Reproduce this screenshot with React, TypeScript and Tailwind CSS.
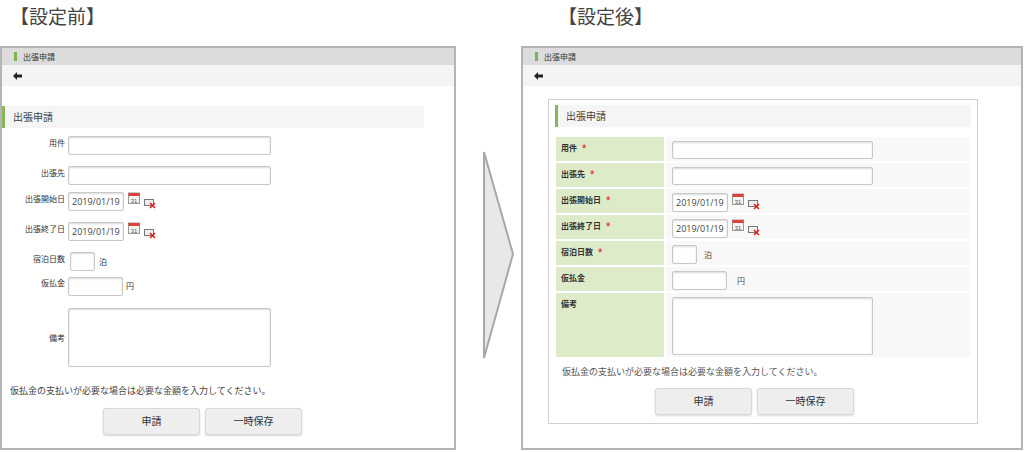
import React from "react";

const F = { fontFamily: '"Open Sans","Noto Sans CJK JP",sans-serif' };

function Cal() {
  return (
    <svg width="12" height="12" viewBox="0 0 12 12">
      <rect x="0.5" y="1" width="11" height="10.5" fill="#f4f4f4" stroke="#999" />
      <rect x="0.5" y="1" width="11" height="3" fill="#e0413a" />
      <text x="6" y="10.5" fontSize="6" textAnchor="middle" fill="#555" fontFamily="Liberation Sans">31</text>
    </svg>
  );
}
function Clr() {
  return (
    <svg width="12" height="11" viewBox="0 0 12 11" className="mt-[6px]">
      <rect x="0.5" y="1.5" width="9" height="6" fill="#eee" stroke="#777" />
      <path d="M6 5l5 5M11 5l-5 5" stroke="#e0201a" strokeWidth="1.6" />
    </svg>
  );
}
const inp = "bg-white border border-[#c8c8c8] rounded-[2px] shadow-[inset_0_1px_2px_rgba(0,0,0,0.15)]";

function DateIn() {
  return (
    <div className="flex items-start gap-[4px]">
      <div className={`${inp} w-[56px] h-[19px] text-[9px] text-[#444] pl-[3px] flex items-center`}>2019/01/19</div>
      <Cal />
      <Clr />
    </div>
  );
}

function Header() {
  return (
    <>
      <div className="h-[17px] bg-[#dcdcdc] flex items-center pl-[12px] gap-[6px]">
        <div className="w-[3px] h-[9px] bg-[#7ab547]" />
        <span className="text-[8px] text-[#333]">出張申請</span>
      </div>
      <div className="h-[21px] bg-[#f4f4f4] flex items-center pl-[11px]">
        <svg width="9" height="8" viewBox="0 0 9 8"><path d="M0 4L4 0v2.5h5v3H4V8z" fill="#222" /></svg>
      </div>
    </>
  );
}

function Btn({ t }: { t: string }) {
  return (
    <div className="w-[97px] h-[27px] bg-[#eeeeee] border border-[#d8d8d8] rounded-[3px] shadow-[0_1px_2px_rgba(0,0,0,0.15)] flex items-center justify-center text-[10px] text-[#333]">{t}</div>
  );
}

function Left() {
  const L = ({ t, c }: { t: string; c: string }) => (
    <div className={`w-[66px] text-right pr-[3px] text-[8px] text-[#333] ${c}`}>{t}</div>
  );
  return (
    <div className="w-[456px] h-[404px] border-2 border-[#b4b4b4] flex flex-col">
      <Header />
      <div className="mt-[20px] w-[422px] h-[22px] bg-[#f5f5f5] border-l-[3px] border-[#8ab65a] flex items-center pl-[8px] text-[10px] text-[#444]">出張申請</div>
      <div className="flex flex-col mt-[8px] gap-[11px]">
        <div className="flex items-start"><L t="用件" c="mt-[1px]" /><div className={`${inp} w-[203px] h-[19px]`} /></div>
        <div className="flex items-start"><L t="出張先" c="mt-[1px]" /><div className={`${inp} w-[203px] h-[19px]`} /></div>
      </div>
      <div className="flex flex-col mt-[7px] gap-[11px]">
        <div className="flex items-start"><L t="出張開始日" c="mt-[1px]" /><DateIn /></div>
        <div className="flex items-start"><L t="出張終了日" c="mt-[1px]" /><DateIn /></div>
        <div className="flex items-center"><L t="宿泊日数" c="-mt-[6px]" /><div className="w-[2px]" /><div className={`${inp} w-[25px] h-[19px]`} /><span className="ml-[4px] text-[8px] text-[#333]">泊</span></div>
      </div>
      <div className="flex items-start mt-[6px]"><L t="仮払金" c="mt-0" /><div className={`${inp} w-[55px] h-[19px]`} /><span className="ml-[3px] mt-[3px] text-[8px] text-[#333]">円</span></div>
      <div className="flex items-center mt-[12px]"><L t="備考" c="" /><div className={`${inp} w-[203px] h-[59px]`} /></div>
      <div className="mt-[17px] pl-[8px] text-[9px] text-[#444]">仮払金の支払いが必要な場合は必要な金額を入力してください。</div>
      <div className="mt-[10px] flex gap-[5px] pl-[101px]"><Btn t="申請" /><Btn t="一時保存" /></div>
    </div>
  );
}

function Row({ t, req, h, children }: { t: string; req?: boolean; h: string; children: React.ReactNode }) {
  return (
    <div className={`flex gap-[2px] ${h}`}>
      <div className="w-[108px] bg-[#deebc9] text-[8px] font-bold text-[#333] pl-[5px] pt-[5px]">
        {t}{req && <span className="text-[#e0415a] ml-[5px]">*</span>}
      </div>
      <div className="flex-1 bg-[#f8f8f8] pl-[6px] pt-[4px]">{children}</div>
    </div>
  );
}

function Right() {
  return (
    <div className="w-[502px] h-[404px] border-2 border-[#b4b4b4] flex flex-col">
      <Header />
      <div className="mt-[13px] ml-[25px] w-[430px] h-[325px] border border-[#d0d0d0] flex flex-col px-[6px] pt-[5px]">
        <div className="h-[22px] bg-[#f5f5f5] border-l-[3px] border-[#8ab65a] flex items-center pl-[8px] text-[10px] text-[#444]">出張申請</div>
        <div className="mt-[10px] flex flex-col gap-[2px] pl-[1px] pr-[1px]">
          <Row t="用件" req h="h-[24px]"><div className={`${inp} w-[201px] h-[18px]`} /></Row>
          <Row t="出張先" req h="h-[24px]"><div className={`${inp} w-[201px] h-[18px]`} /></Row>
          <Row t="出張開始日" req h="h-[24px]"><DateIn /></Row>
          <Row t="出張終了日" req h="h-[24px]"><DateIn /></Row>
          <Row t="宿泊日数" req h="h-[24px]"><div className="flex items-center"><div className={`${inp} w-[25px] h-[19px]`} /><span className="ml-[7px] text-[8px] text-[#444]">泊</span></div></Row>
          <Row t="仮払金" h="h-[24px]"><div className="flex items-center"><div className={`${inp} w-[55px] h-[19px]`} /><span className="ml-[10px] text-[8px] text-[#444]">円</span></div></Row>
          <Row t="備考" h="h-[64px]"><div className={`${inp} w-[201px] h-[58px]`} /></Row>
        </div>
        <div className="mt-[8px] pl-[7px] text-[9px] text-[#555]">仮払金の支払いが必要な場合は必要な金額を入力してください。</div>
        <div className="mt-[9px] flex gap-[5px] pl-[100px]"><Btn t="申請" /><Btn t="一時保存" /></div>
      </div>
    </div>
  );
}

export default function App() {
  return (
    <div style={F} className="w-[1024px] h-[452px] bg-white relative overflow-hidden">
      <div className="flex h-[46px]">
        <div className="w-[521px] pl-[10px] pt-[3px] text-[19px] text-[#444]">【設定前】</div>
        <div className="pl-[37px] pt-[3px] text-[19px] text-[#444]">【設定後】</div>
      </div>
      <div className="flex items-start">
        <Left />
        <div className="w-[65px] h-[404px] pl-[26px] pt-[104px]">
          <svg width="34" height="212" viewBox="0 0 34 212">
            <path d="M2 2L31 104L2 208Z" fill="#e8e8e8" stroke="#a8a8a8" strokeWidth="2" />
          </svg>
        </div>
        <Right />
      </div>
    </div>
  );
}
